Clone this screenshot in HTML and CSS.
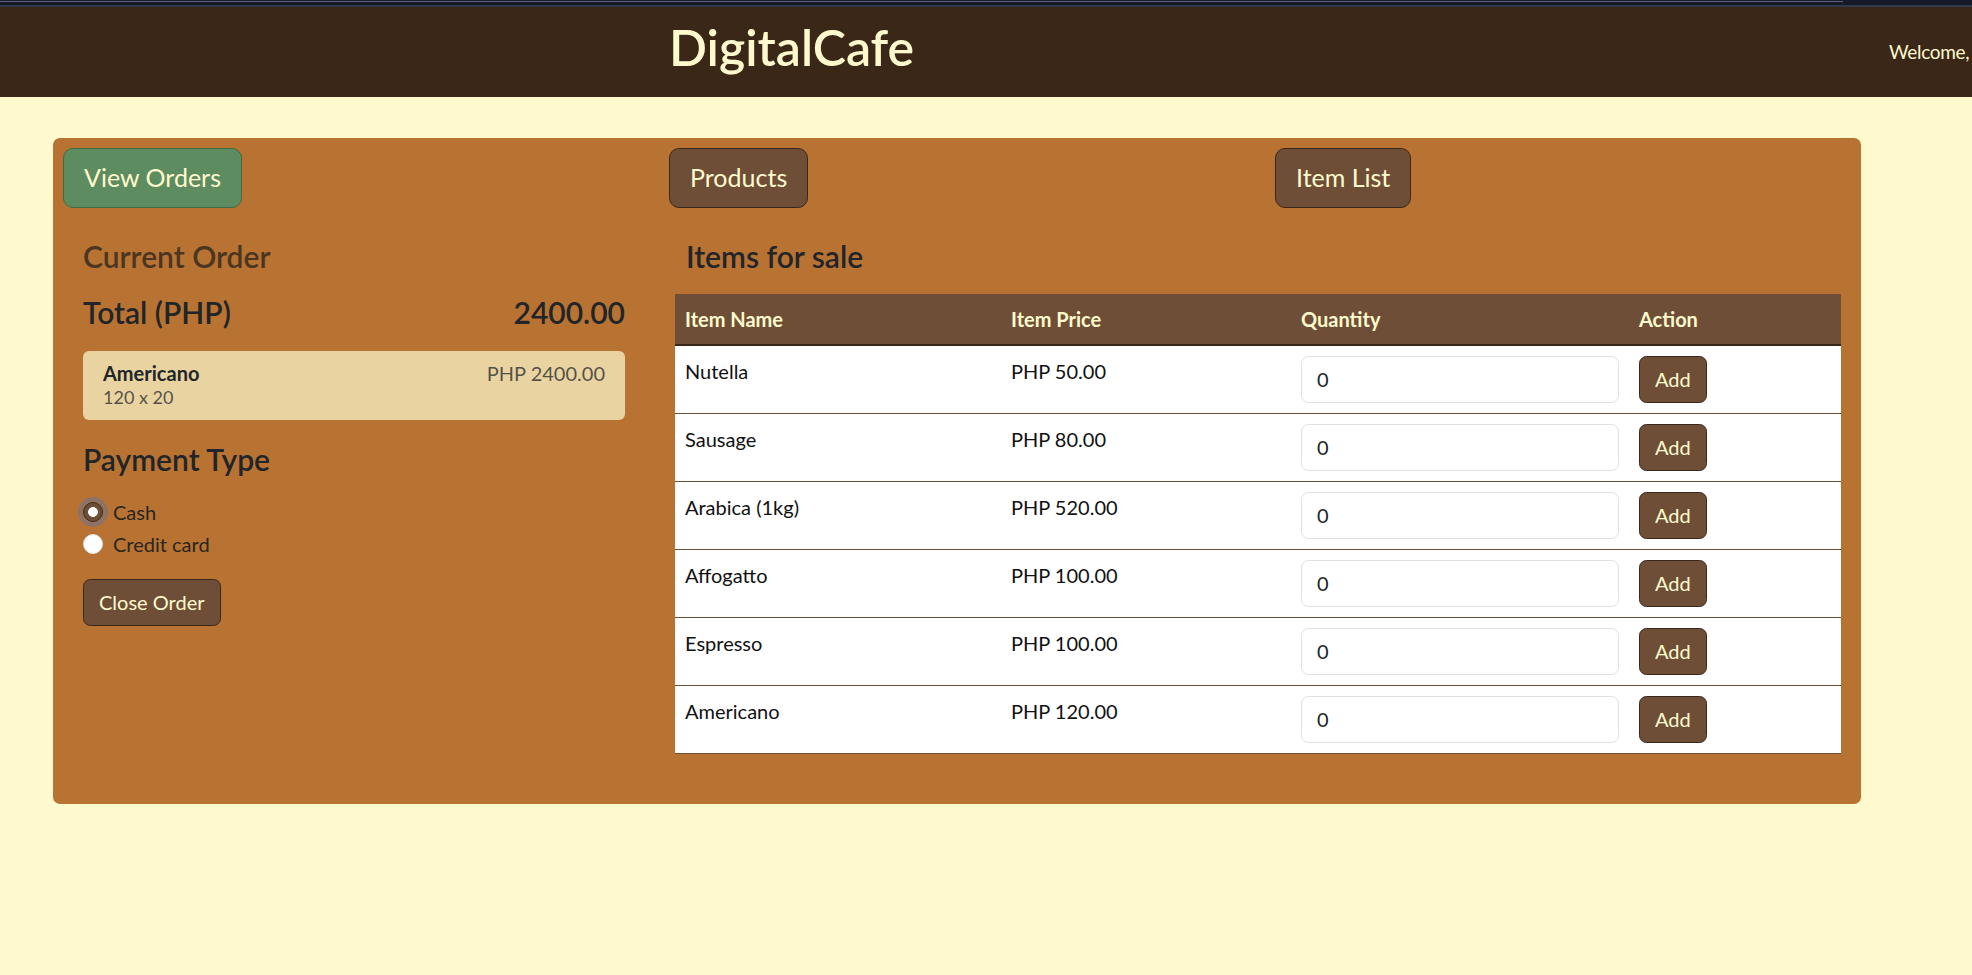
FILE: index.html
```html
<!DOCTYPE html>
<html lang="en">
<head>
<meta charset="utf-8">
<title>DigitalCafe</title>
<link rel="stylesheet" href="styles.css">
</head>
<body>
<div class="chrome"><div class="chrome-line"></div></div>
<header class="topnav">
  <span class="nav-spacer"></span>
  <h1 class="brand">DigitalCafe</h1>
  <span class="welcome">Welcome,</span>
</header>
<main class="page">
  <section class="panel">
    <nav class="tabs">
      <button class="btn btn-lg btn-green">View Orders</button>
      <button class="btn btn-lg btn-brown">Products</button>
      <button class="btn btn-lg btn-brown">Item List</button>
    </nav>
    <div class="content">
      <div class="order-col">
        <h4 class="heading heading-muted">Current Order</h4>
        <div class="total-row">
          <span>Total (PHP)</span>
          <span>2400.00</span>
        </div>
        <div class="order-item">
          <div class="order-item-info">
            <div class="order-item-name">Americano</div>
            <div class="order-item-qty">120 x 20</div>
          </div>
          <div class="order-item-price">PHP 2400.00</div>
        </div>
        <h4 class="heading">Payment Type</h4>
        <div class="form-check">
          <input class="radio radio-focus" type="radio" name="pay" id="cash" checked>
          <label for="cash">Cash</label>
        </div>
        <div class="form-check">
          <input class="radio" type="radio" name="pay" id="cc">
          <label for="cc">Credit card</label>
        </div>
        <button class="btn btn-brown close-btn">Close Order</button>
      </div>
      <div class="items-col">
        <h4 class="heading items-heading">Items for sale</h4>
        <table class="items-table">
          <colgroup>
            <col class="c-name"><col class="c-price"><col class="c-qty"><col class="c-action">
          </colgroup>
          <thead>
            <tr><th>Item Name</th><th>Item Price</th><th>Quantity</th><th>Action</th></tr>
          </thead>
          <tbody>
            <tr><td>Nutella</td><td>PHP 50.00</td><td><input class="qty" type="text" value="0"></td><td><button class="btn btn-brown">Add</button></td></tr>
            <tr><td>Sausage</td><td>PHP 80.00</td><td><input class="qty" type="text" value="0"></td><td><button class="btn btn-brown">Add</button></td></tr>
            <tr><td>Arabica (1kg)</td><td>PHP 520.00</td><td><input class="qty" type="text" value="0"></td><td><button class="btn btn-brown">Add</button></td></tr>
            <tr><td>Affogatto</td><td>PHP 100.00</td><td><input class="qty" type="text" value="0"></td><td><button class="btn btn-brown">Add</button></td></tr>
            <tr><td>Espresso</td><td>PHP 100.00</td><td><input class="qty" type="text" value="0"></td><td><button class="btn btn-brown">Add</button></td></tr>
            <tr><td>Americano</td><td>PHP 120.00</td><td><input class="qty" type="text" value="0"></td><td><button class="btn btn-brown">Add</button></td></tr>
          </tbody>
        </table>
      </div>
    </div>
  </section>
</main>
</body>
</html>
```
FILE: styles.css
```css
* { box-sizing: border-box; }
html, body { margin: 0; padding: 0; }
body {
  background: #fffacd;
  font-family: Lato, "Noto Sans", sans-serif;
  font-size: 20px;
  line-height: 1.5;
  color: #212529;
  overflow: hidden;
}
.chrome {
  height: 7px;
  background: #141a2a;
  border-bottom: 2px solid #323849;
  padding-top: 1px;
}
.chrome-line {
  width: 1843px;
  height: 1px;
  background: #5b6279;
}
.topnav {
  height: 90px;
  background: #3b2718;
  display: grid;
  grid-template-columns: 669px 1220px auto;
  align-items: center;
  overflow: hidden;
  white-space: nowrap;
}
.brand {
  margin: 0 0 10px 0;
  font-size: 50px;
  line-height: 1.2;
  font-weight: 600;
  color: #fffacd;
}
.welcome {
  color: #fffacd;
  font-size: 19px;
  letter-spacing: -0.3px;
}
.page {
  padding: 41px 111px 0 53px;
}
.panel {
  background: #b87333;
  border-radius: 7px;
  padding: 10px 20px 50px 10px;
}
.tabs {
  display: grid;
  grid-template-columns: 576px 576px 576px;
  column-gap: 30px;
  justify-items: start;
}
.btn {
  font-family: inherit;
  font-size: 20px;
  line-height: 30px;
  padding: 7.5px 15px;
  border: 1px solid #3b2718;
  border-radius: 7.5px;
  color: #fffacd;
  background: #6f4e37;
  cursor: pointer;
}
.btn-lg {
  font-size: 25px;
  line-height: 37.5px;
  padding: 10px 20px;
  border-radius: 10px;
}
.btn-green {
  background: #5e8c61;
  border-color: #3f6b45;
}
.btn-brown {
  background: #6f4e37;
  border-color: #3b2718;
}
.content {
  display: grid;
  grid-template-columns: 542px 1166px;
  column-gap: 50px;
  align-items: start;
  margin-top: 30px;
  padding-left: 20px;
}
.heading {
  margin: 0 0 20px 0;
  font-size: 30px;
  line-height: 1.2;
  font-weight: 600;
  color: #212529;
}
.heading-muted { color: #4b3621; }
.total-row {
  display: flex;
  justify-content: space-between;
  font-size: 30px;
  line-height: 1.2;
  font-weight: 600;
  color: #212529;
  margin-bottom: 21px;
}
.order-item {
  display: flex;
  justify-content: space-between;
  align-items: flex-start;
  background: #e9d3a1;
  border-radius: 6px;
  padding: 10px 20px;
  margin-bottom: 21px;
}
.order-item-name {
  font-weight: 700;
  font-size: 20px;
  line-height: 24px;
  color: #212529;
}
.order-item-qty {
  font-size: 18px;
  line-height: 25px;
  color: rgba(33, 37, 41, 0.75);
}
.order-item-price {
  font-size: 20px;
  line-height: 24px;
  color: rgba(33, 37, 41, 0.75);
}
.form-check {
  display: flex;
  align-items: flex-start;
  min-height: 30px;
  margin-bottom: 2.5px;
  line-height: 30px;
}
.radio {
  appearance: none;
  -webkit-appearance: none;
  width: 20px;
  height: 20px;
  margin: 5px 10px 0 0;
  border-radius: 50%;
  border: 1px solid #dee2e6;
  background: #fff;
  flex-shrink: 0;
}
.radio:checked {
  background: radial-gradient(circle, #fff 0 4.6px, #6f4e37 5.2px);
  border-color: #3b2718;
}
.radio-focus {
  box-shadow: 0 0 0 5px rgba(13, 110, 253, 0.25);
}
.form-check label { color: #2a2520; }
.close-btn {
  margin-top: 17px;
}
.items-heading {
  padding-left: 11px;
}
.items-table {
  width: 100%;
  table-layout: fixed;
  border-collapse: collapse;
  background: #fff;
}
.c-name { width: 326px; }
.c-price { width: 290px; }
.c-qty { width: 338px; }
.c-action { width: 212px; }
.items-table th {
  background: #6f4e37;
  color: #fffacd;
  font-weight: 700;
  text-align: left;
  padding: 10px;
  line-height: 30px;
  border-bottom: 2px solid #3b2718;
}
.items-table td {
  padding: 10px;
  vertical-align: top;
  line-height: 30px;
  color: #111;
  border-bottom: 1px solid #6f4e37;
}
.qty {
  display: block;
  width: 100%;
  height: 47px;
  padding: 7.5px 15px;
  border: 1px solid #dee2e6;
  border-radius: 7.5px;
  font-family: inherit;
  font-size: 20px;
  line-height: 30px;
  color: #212529;
  background: #fff;
}
```
